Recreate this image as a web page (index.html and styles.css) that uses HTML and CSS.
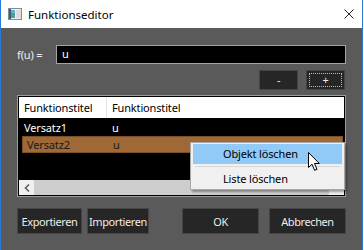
FILE: index.html
```html
<!DOCTYPE html>
<html lang="de">
<head>
    <meta charset="UTF-8">
    <title>Funktionseditor</title>
    <link rel="stylesheet" href="styles.css">
</head>
<body>
    <div class="window">
        <!-- Title bar -->
        <div class="titlebar">
            <svg class="app-icon" width="14" height="12" viewBox="0 0 14 12">
                <rect x="0.5" y="0.5" width="13" height="11" fill="#f2f2f2" stroke="#8a8a8a"/>
                <rect x="1" y="1" width="2" height="10" fill="#2d5f8f"/>
                <rect x="3" y="2" width="4" height="8" fill="#4fa383"/>
                <rect x="3" y="2" width="4" height="3" fill="#5fb0d0"/>
                <rect x="8" y="2" width="5" height="8" fill="#dcdcdc"/>
            </svg>
            <span class="title">Funktionseditor</span>
            <svg class="close" width="10" height="10" viewBox="0 0 10 10">
                <path d="M0.5 0.5 L9.5 9.5 M9.5 0.5 L0.5 9.5" stroke="#222" stroke-width="1"/>
            </svg>
        </div>

        <!-- Dialog content -->
        <div class="content">
            <div class="formula-row">
                <span class="formula-label">f(u) =</span>
                <div class="formula-input">u</div>
            </div>

            <div class="pm-row">
                <button class="btn btn-small">-</button>
                <button class="btn btn-small focused"><span class="focus-ring">+</span></button>
            </div>

            <div class="list">
                <div class="list-header">
                    <div class="col col-1">Funktionstitel</div>
                    <div class="col col-2">Funktionstitel</div>
                </div>
                <div class="list-body">
                    <div class="row">
                        <div class="col col-1">Versatz1</div>
                        <div class="col col-2">u</div>
                    </div>
                    <div class="row selected">
                        <div class="col col-1">Versatz2</div>
                        <div class="col col-2">u</div>
                    </div>
                </div>
                <div class="hscroll">
                    <div class="sb-btn">
                        <svg width="6" height="8" viewBox="0 0 6 8"><path d="M5 0.5 L1.5 4 L5 7.5" fill="none" stroke="#606060" stroke-width="1.6"/></svg>
                    </div>
                    <div class="sb-thumb"></div>
                    <div class="sb-btn"></div>
                </div>
            </div>

            <div class="footer">
                <div class="footer-group">
                    <button class="btn btn-export">Exportieren</button>
                    <button class="btn btn-import">Importieren</button>
                </div>
                <div class="footer-group wide">
                    <button class="btn btn-main">OK</button>
                    <button class="btn btn-main">Abbrechen</button>
                </div>
            </div>
        </div>

        <!-- Context menu -->
        <div class="context-menu">
            <div class="menu-item hover">Objekt löschen</div>
            <div class="menu-sep"></div>
            <div class="menu-item">Liste löschen</div>
        </div>

        <svg class="cursor" width="13" height="20" viewBox="0 0 13 20">
            <path d="M0.5 0.5 L0.5 15.5 L4 12.2 L6.6 18.3 L9 17.3 L6.5 11.5 L11.3 11.5 Z" fill="#fff" stroke="#000" stroke-width="1"/>
        </svg>
    </div>
</body>
</html>
```

FILE: styles.css
```css
:root {
    --frame: #2b79d3;
    --body-bg: #5a5a5a;
    --btn-bg: #262626;
    --btn-border: #454545;
    --btn-text: #ececec;
    --list-border: #9c9c9c;
    --selected: #9e6837;
    --menu-bg: #f0f0f0;
    --menu-hover: #91c9f7;
}

* {
    box-sizing: border-box;
}

body {
    margin: 0;
    width: 364px;
    height: 250px;
    overflow: hidden;
    background: #ffffff;
    font-family: "Noto Sans", "DejaVu Sans", sans-serif;
    font-size: 11px;
    letter-spacing: -0.15px;
}

.window {
    position: relative;
    width: 363px;
    height: 250px;
    border-left: 1px solid var(--frame);
    border-right: 1px solid var(--frame);
    display: flex;
    flex-direction: column;
}

/* Title bar */
.titlebar {
    height: 28px;
    background: #ffffff;
    display: flex;
    align-items: center;
    padding: 0 0 0 7px;
    flex-shrink: 0;
}

.app-icon {
    margin-right: 6px;
    margin-top: -1px;
}

.title {
    flex: 1;
    font-size: 11.5px;
    letter-spacing: 0;
    color: #000;
}

.close {
    margin-right: 8px;
}

/* Content */
.content {
    flex: 1;
    background: var(--body-bg);
    padding: 17px 16px 0 16px;
    display: flex;
    flex-direction: column;
}

.formula-row {
    display: flex;
    align-items: center;
    height: 19px;
}

.formula-label {
    width: 39px;
    color: #f0f0f0;
}

.formula-input {
    flex: 1;
    height: 19px;
    background: #000;
    border: 1px solid #a3a3a3;
    color: #fff;
    padding: 0 0 0 5px;
    line-height: 16px;
}

.pm-row {
    display: flex;
    justify-content: flex-end;
    gap: 8px;
    margin-top: 6px;
    padding-right: 1px;
}

.btn {
    background: var(--btn-bg);
    border: 1px solid var(--btn-border);
    color: var(--btn-text);
    font-family: inherit;
    font-size: 11px;
    letter-spacing: -0.4px;
    padding: 0;
    margin: 0;
}

.btn-small {
    width: 39px;
    height: 20px;
    line-height: 16px;
}

.btn.focused {
    padding: 2px;
}

.focus-ring {
    display: block;
    height: 100%;
    border: 1px dotted #bdbdbd;
    line-height: 12px;
}

/* List */
.list {
    margin-top: 5px;
    height: 102px;
    border: 1px solid var(--list-border);
    background: #000;
    padding: 1px;
    display: flex;
    flex-direction: column;
}

.list-header {
    display: flex;
    background: #fff;
    height: 21px;
    align-items: center;
    color: #000;
}

.col {
    padding-left: 5px;
}

.col-1 {
    width: 88px;
    border-right: 1px solid #e3e3e3;
    height: 100%;
    display: flex;
    align-items: center;
}

.col-2 {
    padding-left: 5px;
}

.list-body {
    flex: 1;
}

.row {
    display: flex;
    align-items: center;
    height: 18px;
    color: #fff;
}

.row .col-1 {
    border-right: none;
}

.row.selected {
    background: var(--selected);
    border: 1px solid #7d4f26;
    margin: 0 1px 0 3px;
    color: #1a1a1a;
    height: 17px;
}

.row.selected .col-1 {
    width: 85px;
    padding-left: 4px;
}

.hscroll {
    height: 15px;
    display: flex;
}

.sb-btn {
    width: 15px;
    background: #f0f0f0;
    display: flex;
    align-items: center;
    justify-content: center;
}

.sb-thumb {
    flex: 1;
    background: #cdcdcd;
}

/* Footer */
.footer {
    margin-top: 11px;
    display: flex;
    justify-content: space-between;
    height: 26px;
}

.footer-group {
    display: flex;
    gap: 5px;
}

.footer-group.wide {
    gap: 10px;
}

.btn-export {
    width: 65px;
}

.btn-import {
    width: 62px;
}

.btn-main {
    width: 77px;
}

/* Context menu */
.context-menu {
    position: absolute;
    left: 189px;
    top: 142px;
    width: 155px;
    height: 48px;
    background: var(--menu-bg);
    border: 1px solid #a8a8a8;
    box-shadow: 2px 2px 2px rgba(0, 0, 0, 0.35);
    padding: 1px 2px;
    color: #000;
}

.menu-item {
    height: 20px;
    line-height: 20px;
    padding-left: 30px;
}

.menu-item.hover {
    background: var(--menu-hover);
}

.menu-sep {
    height: 1px;
    background: #d7d7d7;
    margin: 2px 2px;
}

.cursor {
    position: absolute;
    left: 307px;
    top: 152px;
}
```
